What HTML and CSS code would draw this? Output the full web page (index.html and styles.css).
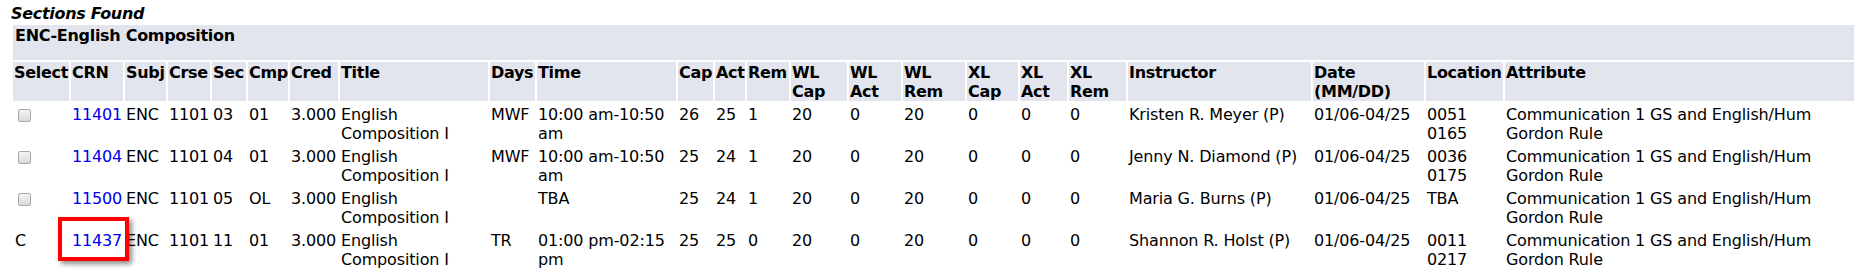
FILE: index.html
```html
<!DOCTYPE html>
<html>
<head>
<meta charset="utf-8">
<link rel="stylesheet" href="styles.css">
</head>
<body>
<table class="datadisplaytable">
<caption class="captiontext">Sections Found</caption>
<colgroup>
<col class="w56"><col class="w52"><col class="w41"><col class="w42"><col class="w34"><col class="w40"><col class="w48"><col class="w148"><col class="w45"><col class="w139"><col class="w35"><col class="w30"><col class="w42"><col class="w56"><col class="w52"><col class="w62"><col class="w51"><col class="w47"><col class="w57"><col class="w183"><col class="w111"><col class="w77"><col class="w349">
</colgroup>
<tr><th class="ddtitle" colspan="23">ENC-English Composition</th></tr>
<tr>
<th class="ddheader">Select</th><th class="ddheader">CRN</th><th class="ddheader">Subj</th><th class="ddheader">Crse</th><th class="ddheader">Sec</th><th class="ddheader">Cmp</th><th class="ddheader">Cred</th><th class="ddheader">Title</th><th class="ddheader">Days</th><th class="ddheader">Time</th><th class="ddheader">Cap</th><th class="ddheader">Act</th><th class="ddheader">Rem</th><th class="ddheader">WL<br>Cap</th><th class="ddheader">WL<br>Act</th><th class="ddheader">WL<br>Rem</th><th class="ddheader">XL<br>Cap</th><th class="ddheader">XL<br>Act</th><th class="ddheader">XL<br>Rem</th><th class="ddheader">Instructor</th><th class="ddheader">Date<br>(MM/DD)</th><th class="ddheader">Location</th><th class="ddheader">Attribute</th>
</tr>
<tr>
<td><input type="checkbox" class="sel" disabled></td><td><a href="#">11401</a></td><td>ENC</td><td>1101</td><td>03</td><td>01</td><td>3.000</td><td>English Composition I</td><td>MWF</td><td>10:00 am-10:50 am</td><td>26</td><td>25</td><td>1</td><td>20</td><td>0</td><td>20</td><td>0</td><td>0</td><td>0</td><td>Kristen R. Meyer (P)</td><td>01/06-04/25</td><td>0051 0165</td><td>Communication 1 GS and English/Hum<br>Gordon Rule</td>
</tr>
<tr>
<td><input type="checkbox" class="sel" disabled></td><td><a href="#">11404</a></td><td>ENC</td><td>1101</td><td>04</td><td>01</td><td>3.000</td><td>English Composition I</td><td>MWF</td><td>10:00 am-10:50 am</td><td>25</td><td>24</td><td>1</td><td>20</td><td>0</td><td>20</td><td>0</td><td>0</td><td>0</td><td>Jenny N. Diamond (P)</td><td>01/06-04/25</td><td>0036 0175</td><td>Communication 1 GS and English/Hum<br>Gordon Rule</td>
</tr>
<tr>
<td><input type="checkbox" class="sel" disabled></td><td><a href="#">11500</a></td><td>ENC</td><td>1101</td><td>05</td><td>OL</td><td>3.000</td><td>English Composition I</td><td></td><td>TBA</td><td>25</td><td>24</td><td>1</td><td>20</td><td>0</td><td>20</td><td>0</td><td>0</td><td>0</td><td>Maria G. Burns (P)</td><td>01/06-04/25</td><td>TBA</td><td>Communication 1 GS and English/Hum<br>Gordon Rule</td>
</tr>
<tr>
<td class="closed">C</td><td><span class="marked"><a href="#">11437</a><span class="callout"></span></span></td><td>ENC</td><td>1101</td><td>11</td><td>01</td><td>3.000</td><td>English Composition I</td><td>TR</td><td>01:00 pm-02:15 pm</td><td>25</td><td>25</td><td>0</td><td>20</td><td>0</td><td>20</td><td>0</td><td>0</td><td>0</td><td>Shannon R. Holst (P)</td><td>01/06-04/25</td><td>0011 0217</td><td>Communication 1 GS and English/Hum<br>Gordon Rule</td>
</tr>
</table>
</body>
</html>
```
FILE: styles.css
```css
html, body {
  margin: 0;
  padding: 0;
  background: #ffffff;
}
body {
  padding: 4px 10px 0 11px;
  font-family: "DejaVu Sans", "Liberation Sans", sans-serif;
  font-size: 16px;
  line-height: 18.5px;
  letter-spacing: -0.15px;
  color: #000000;
}
.datadisplaytable {
  width: 1845px;
  table-layout: fixed;
  border-collapse: separate;
  border-spacing: 2px;
  margin: 0;
}
.captiontext {
  text-align: left;
  font-weight: bold;
  font-style: italic;
  letter-spacing: -0.3px;
  line-height: 19px;
  padding: 0;
}
.w56 { width: 56px; } .w52 { width: 52px; } .w41 { width: 41px; } .w42 { width: 42px; }
.w34 { width: 34px; } .w40 { width: 40px; } .w48 { width: 48px; } .w148 { width: 148px; }
.w45 { width: 45px; } .w139 { width: 139px; } .w35 { width: 35px; } .w30 { width: 30px; }
.w62 { width: 62px; } .w51 { width: 51px; } .w47 { width: 47px; } .w57 { width: 57px; }
.w183 { width: 183px; } .w111 { width: 111px; } .w77 { width: 77px; } .w349 { width: 349px; }

th, td {
  text-align: left;
  vertical-align: top;
  overflow: visible;
  white-space: normal;
}
td {
  padding: 3px 1px 0 1px;
  height: 37px;
}
.ddtitle {
  background: #e3e5ee;
  font-weight: bold;
  letter-spacing: -0.3px;
  height: 33px;
  padding: 2px 2px 0 2px;
}
.ddheader {
  background: #e3e5ee;
  font-weight: bold;
  letter-spacing: -0.3px;
  height: 37px;
  padding: 2px 1px 0 1px;
}
td a {
  color: #0000ee;
  text-decoration: none;
}
.sel {
  appearance: none;
  -webkit-appearance: none;
  width: 13px;
  height: 13px;
  margin: 3px 3px 3px 4px;
  border: 1px solid #a8a8a8;
  border-radius: 2px;
  background: linear-gradient(#f4f4f4, #dadada);
  box-sizing: border-box;
  display: block;
}
.closed {
  padding-left: 2px;
}
.marked {
  position: relative;
  display: inline-block;
}
.callout {
  position: absolute;
  left: -14px;
  top: -15px;
  width: 71px;
  height: 44px;
  box-sizing: border-box;
  border: 4px solid #ff0000;
  box-shadow: 3px 3px 5px rgba(0, 0, 0, 0.45);
}
```
